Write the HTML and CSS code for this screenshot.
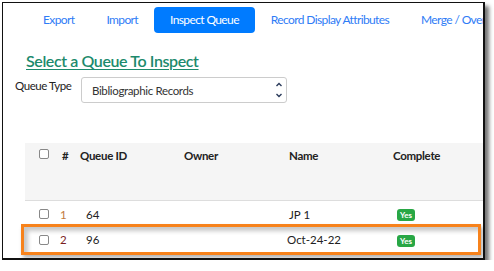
FILE: index.html
```html
<!DOCTYPE html>
<html>
<head>
<meta charset="utf-8">
<link rel="stylesheet" href="styles.css">
</head>
<body>
<div class="frame">
  <nav class="tabs">
    <a class="tab">Export</a>
    <a class="tab">Import</a>
    <a class="tab active">Inspect Queue</a>
    <a class="tab">Record Display Attributes</a>
    <a class="tab">Merge / Overlay Profiles</a>
  </nav>
  <h2 class="title">Select a Queue To Inspect</h2>
  <div class="qtype">
    <label class="qlabel">Queue Type</label>
    <div class="select">
      <span>Bibliographic Records</span>
      <svg class="chev" width="8" height="18" viewBox="0 0 8 18">
        <path d="M1.5 5 L4 2.5 L6.5 5" fill="none" stroke="#2a3a5a" stroke-width="1.4"/>
        <path d="M1.5 13 L4 15.5 L6.5 13" fill="none" stroke="#2a3a5a" stroke-width="1.4"/>
      </svg>
    </div>
  </div>
  <div class="grid">
    <div class="row head">
      <div class="c cb"><span class="box"></span></div>
      <div class="c num">#</div>
      <div class="c">Queue ID</div>
      <div class="c">Owner</div>
      <div class="c">Name</div>
      <div class="c">Complete</div>
    </div>
    <div class="row">
      <div class="c cb"><span class="box"></span></div>
      <div class="c num n1">1</div>
      <div class="c id">64</div>
      <div class="c"></div>
      <div class="c">JP 1</div>
      <div class="c"><span class="badge">Yes</span></div>
    </div>
    <div class="row">
      <div class="c cb"><span class="box"></span></div>
      <div class="c num n2">2</div>
      <div class="c id">96</div>
      <div class="c"></div>
      <div class="c nm2">Oct-24-22</div>
      <div class="c"><span class="badge">Yes</span></div>
    </div>
  </div>
  <div class="highlight"></div>
</div>
</body>
</html>
```
FILE: styles.css
```css
html, body {
  margin: 0;
  padding: 0;
  background: #fff;
}
body {
  font-family: Lato, "Open Sans", sans-serif;
  color: #222;
}
.frame {
  position: relative;
  margin: 2px 0 0 2px;
  width: 480px;
  height: 255px;
  border: 2px solid #111;
  border-left-width: 1.5px;
  border-top-width: 1.5px;
  box-shadow: 4px 4px 4px rgba(0,0,0,0.55);
  overflow: hidden;
  background: #fff;
}
.tabs {
  display: flex;
  margin: 4px 0 0 24px;
  white-space: nowrap;
}
.tab {
  display: block;
  padding: 0 16px;
  height: 26px;
  line-height: 26px;
  font-size: 12px;
  letter-spacing: -0.62px;
  color: #2f7cf6;
}
.tab.active {
  background: #007bff;
  color: #fff;
  border-radius: 4px;
}
.title {
  margin: 17px 0 0 23px;
  font-size: 16px;
  letter-spacing: -0.4px;
  line-height: 22px;
  font-weight: 600;
  color: #1c8a6c;
  text-decoration: underline;
  text-underline-offset: 2px;
  text-decoration-thickness: 1px;
}
.qtype {
  display: flex;
  align-items: flex-start;
  margin: 5px 0 0 12px;
}
.qlabel {
  width: 66px;
  font-size: 11.5px;
  letter-spacing: -0.45px;
  line-height: 14px;
  margin-top: 2px;
  color: #222;
}
.select {
  display: flex;
  align-items: center;
  justify-content: space-between;
  box-sizing: border-box;
  width: 206px;
  height: 26px;
  border: 1px solid #ccc;
  border-radius: 3px;
  padding: 0 3px 0 10px;
  font-size: 11.5px;
  letter-spacing: -0.35px;
  color: #333;
}
.grid {
  margin: 40px 0 0 22px;
  font-size: 11.5px;
}
.row {
  display: grid;
  grid-template-columns: 32px 21px 104px 105px 104px 1fr;
  height: 24px;
  align-items: center;
}
.row.head {
  height: 57px;
  align-items: start;
  background: #f5f5f5;
  border-bottom: 1px solid #ddd;
  font-weight: 700;
  letter-spacing: -0.3px;
  color: #222;
}
.row.head .c {
  padding-top: 6px;
  line-height: 14px;
}
.c {
  padding-left: 2px;
  white-space: nowrap;
}
.cb {
  padding-left: 14px;
  display: flex;
  align-items: center;
}
.box {
  display: inline-block;
  width: 8px;
  height: 8px;
  border: 1px solid #888;
  border-radius: 2px;
  background: #fff;
}
.num { padding-left: 3px; }
.row.head .num { padding-left: 5px; }
.n1 { color: #c27a3d; }
.n2 { color: #7a1f1f; }
.id { padding-left: 8px; }
.nm2 { padding-left: 0; }
.row + .row {
  padding-top: 1px;
}
.row + .row + .row {
  height: 27px;
  padding-top: 0;
}
.badge {
  display: inline-block;
  margin-left: 4px;
  background: #28a745;
  color: #fff;
  font-size: 8px;
  font-weight: 700;
  line-height: 12px;
  height: 12px;
  padding: 0 3px;
  border-radius: 3px;
}
.highlight {
  position: absolute;
  left: 18px;
  top: 221px;
  width: 454px;
  height: 25px;
  border: 3px solid #f7821b;
  box-shadow: inset 4px 4px 4px rgba(0,0,0,0.22), 2px 3px 4px rgba(0,0,0,0.3);
}
```
